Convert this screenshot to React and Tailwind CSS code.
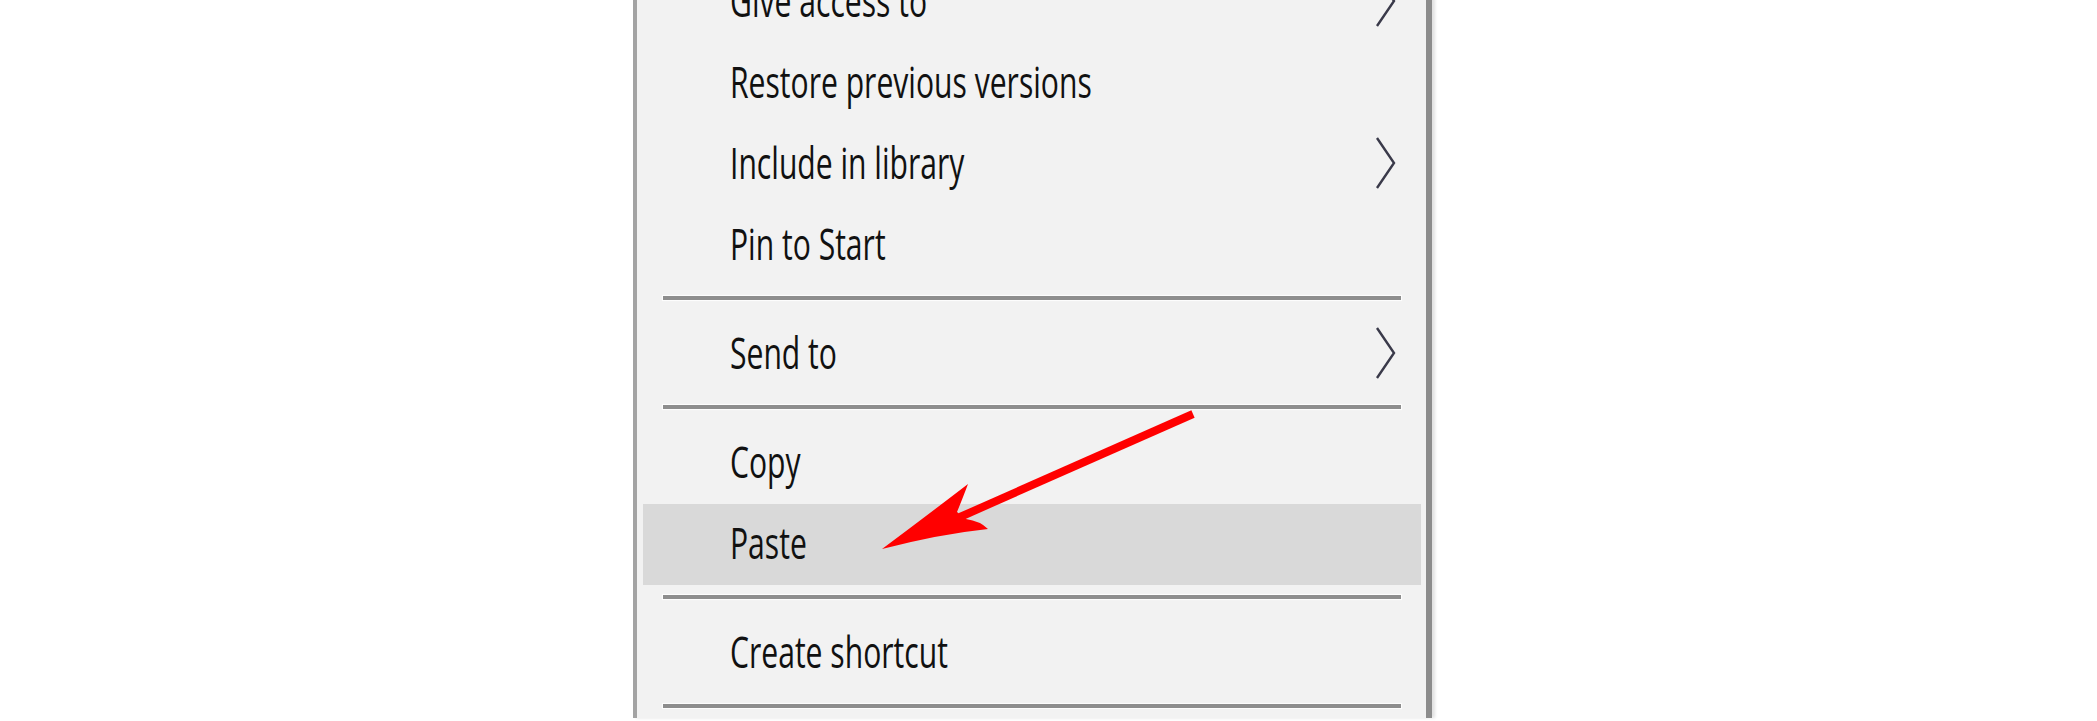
import React from "react";

const rows = [
  { type: "item", label: "Give access to", sub: true },
  { type: "item", label: "Restore previous versions" },
  { type: "item", label: "Include in library", sub: true },
  { type: "item", label: "Pin to Start" },
  { type: "sep" },
  { type: "item", label: "Send to", sub: true },
  { type: "sep" },
  { type: "item", label: "Copy" },
  { type: "item", label: "Paste", active: true },
  { type: "sep" },
  { type: "item", label: "Create shortcut" },
  { type: "sep" },
];

function Chevron() {
  return (
    <svg width="22" height="52" viewBox="0 0 22 52" className="-mt-[4px]">
      <polyline points="2,1 19,26 2,51" fill="none" stroke="#3a3a4a" strokeWidth="2.4" />
    </svg>
  );
}

function MenuRow({ row }) {
  if (row.type === "sep") {
    return (
      <div className="h-[28px] pt-[10px] px-[20px]">
        <div className="h-[4px] bg-[#8e8e8e] shadow-[0_0_1px_1px_rgba(255,255,255,0.8)]" />
      </div>
    );
  }
  return (
    <div
      className={`h-[81px] flex items-center justify-between pl-[87px] pr-[24px] ${
        row.active ? "bg-[#d9d9d9]" : ""
      }`}
    >
      <span className="inline-block origin-left scale-x-[0.70] whitespace-nowrap text-[43px] leading-[81px] pb-[4px] font-medium text-[#111] font-['Open_Sans',sans-serif]">
        {row.label}
      </span>
      {row.sub && <Chevron />}
    </div>
  );
}

export default function App() {
  return (
    <div className="relative w-[2097px] h-[721px] overflow-hidden bg-white">
      <div className="flex pl-[633px]">
        <div className="-mt-[38px] w-[799px] h-[756px] bg-[#f2f2f2] border-l-[4px] border-[#a3a3a3] border-r-[6px] border-r-[#8c8c8c] shadow-[3px_0_3px_rgba(0,0,0,0.12)] pl-[6px] pr-[5px]">
          {rows.map((row, i) => (
            <MenuRow key={i} row={row} />
          ))}
        </div>
      </div>

      {/* red annotation arrow */}
      <svg
        className="absolute left-0 top-0 pointer-events-none"
        width="2097"
        height="721"
        viewBox="0 0 2097 721"
      >
        <line x1="1193" y1="414" x2="960" y2="517" stroke="#ff0000" strokeWidth="8" />
        <path
          d="M882 549 Q925 517 968 484 Q962 500 957 512 L966 519 Q980 521 988 529 Q940 534 882 549 Z"
          fill="#ff0000"
        />
      </svg>
    </div>
  );
}
